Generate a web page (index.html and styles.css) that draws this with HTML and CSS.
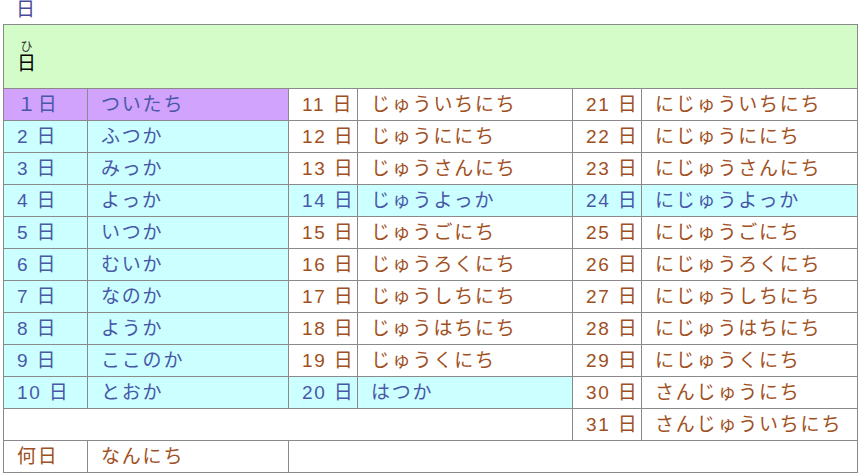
FILE: index.html
```html
<!DOCTYPE html>
<html lang="ja">
<head>
<meta charset="utf-8">
<link rel="stylesheet" href="styles.css">
</head>
<body>
<div class="title">日</div>
<table class="days">
<colgroup>
<col class="c1"><col class="c2"><col class="c3"><col class="c4"><col class="c5"><col class="c6">
</colgroup>
<tr class="head"><td colspan="6"><ruby>日<rt>ひ</rt></ruby></td></tr>
<tr><td class="purple b">１日</td><td class="purple b">ついたち</td><td class="o">11 日</td><td class="o">じゅういちにち</td><td class="o">21 日</td><td class="o">にじゅういちにち</td></tr>
<tr><td class="cyan b">2 日</td><td class="cyan b">ふつか</td><td class="o">12 日</td><td class="o">じゅうににち</td><td class="o">22 日</td><td class="o">にじゅうににち</td></tr>
<tr><td class="cyan b">3 日</td><td class="cyan b">みっか</td><td class="o">13 日</td><td class="o">じゅうさんにち</td><td class="o">23 日</td><td class="o">にじゅうさんにち</td></tr>
<tr><td class="cyan b">4 日</td><td class="cyan b">よっか</td><td class="cyan b">14 日</td><td class="cyan b">じゅうよっか</td><td class="cyan b">24 日</td><td class="cyan b">にじゅうよっか</td></tr>
<tr><td class="cyan b">5 日</td><td class="cyan b">いつか</td><td class="o">15 日</td><td class="o">じゅうごにち</td><td class="o">25 日</td><td class="o">にじゅうごにち</td></tr>
<tr><td class="cyan b">6 日</td><td class="cyan b">むいか</td><td class="o">16 日</td><td class="o">じゅうろくにち</td><td class="o">26 日</td><td class="o">にじゅうろくにち</td></tr>
<tr><td class="cyan b">7 日</td><td class="cyan b">なのか</td><td class="o">17 日</td><td class="o">じゅうしちにち</td><td class="o">27 日</td><td class="o">にじゅうしちにち</td></tr>
<tr><td class="cyan b">8 日</td><td class="cyan b">ようか</td><td class="o">18 日</td><td class="o">じゅうはちにち</td><td class="o">28 日</td><td class="o">にじゅうはちにち</td></tr>
<tr><td class="cyan b">9 日</td><td class="cyan b">ここのか</td><td class="o">19 日</td><td class="o">じゅうくにち</td><td class="o">29 日</td><td class="o">にじゅうくにち</td></tr>
<tr><td class="cyan b">10 日</td><td class="cyan b">とおか</td><td class="cyan b">20 日</td><td class="cyan b">はつか</td><td class="o">30 日</td><td class="o">さんじゅうにち</td></tr>
<tr><td colspan="4"></td><td class="o">31 日</td><td class="o">さんじゅういちにち</td></tr>
<tr><td class="o">何日</td><td class="o">なんにち</td><td colspan="4"></td></tr>
</table>
</body>
</html>
```
FILE: styles.css
```css
html, body {
  margin: 0;
  padding: 0;
  background: #ffffff;
}
body {
  font-family: "Liberation Sans", "Noto Sans CJK JP", sans-serif;
  font-size: 18px;
}
.title {
  height: 24px;
  line-height: 20px;
  padding-left: 16px;
  color: #4a4a9a;
  font-size: 19px;
}
.days {
  margin-left: 3px;
  width: 854px;
  border-collapse: collapse;
  table-layout: fixed;
}
.c1 { width: 84px; }
.c2 { width: 201px; }
.c3 { width: 69px; }
.c4 { width: 215px; }
.c5 { width: 69px; }
.c6 { width: 216px; }
.days td {
  border: 1px solid #8a8a8a;
  height: 32px;
  padding: 0 0 0 13px;
  box-sizing: border-box;
  line-height: 20px;
  font-size: 19px;
  white-space: nowrap;
  letter-spacing: 1.8px;
}
.days .head td {
  height: 64px;
  background: #d4fcc8;
  color: #000000;
  padding-top: 12px;
  letter-spacing: 0;
}
.head ruby {
  font-size: 19px;
}
.head rt {
  font-size: 12px;
  color: #333333;
}
.purple { background: #d1a3fc; }
.cyan { background: #ccffff; }
.b { color: #4858a8; }
.o { color: #a0501e; }
```
